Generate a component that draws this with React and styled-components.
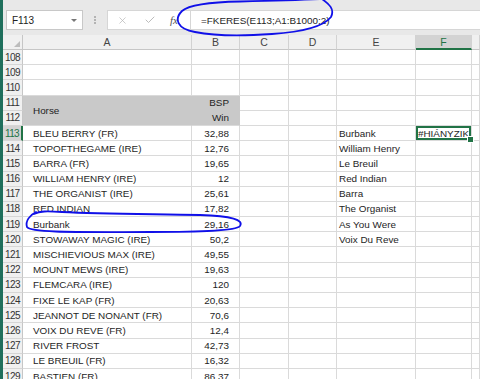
import React from 'react';
import styled, { createGlobalStyle } from 'styled-components';
import { X, Check } from 'lucide-react';

const GREEN = '#217346';
const GRID = '#dadada';
const HEAD_BG = '#f0f0f0';
const SHADE = '#c9c9c9';

const GlobalStyle = createGlobalStyle`
  html, body { margin: 0; padding: 0; background: #fff; }
  body { font-family: "Liberation Sans", Arial, sans-serif; }
`;

const Window = styled.div`
  position: relative;
  width: 480px;
  height: 379px;
  overflow: hidden;
  display: flex;
  background: #fff;
`;

const Edge = styled.div`
  flex: none;
  width: 3px;
  background: #1f6f5c;
`;

const Main = styled.div`
  flex: 1;
  min-width: 0;
  display: flex;
  flex-direction: column;
`;

const FormulaBar = styled.div`
  flex: none;
  height: 35px;
  box-sizing: border-box;
  padding: 10px 0 5px 3px;
  background: #e8e8e8;
  display: flex;
  align-items: stretch;
`;

const NameBox = styled.div`
  width: 77px;
  box-sizing: border-box;
  background: #fff;
  border: 1px solid #c8c8c8;
  display: flex;
  align-items: center;
  justify-content: space-between;
  padding: 0 5px 0 5px;
  font-size: 10px;
  color: #222;
`;

const Caret = styled.span`
  width: 0;
  height: 0;
  border-left: 3px solid transparent;
  border-right: 3px solid transparent;
  border-top: 3px solid #777;
`;

const Grip = styled.div`
  width: 24px;
  display: flex;
  align-items: center;
  justify-content: center;
  &::before {
    content: "";
    width: 0;
    height: 8px;
    border-left: 2px dotted #b3b3b3;
  }
`;

const FuncBox = styled.div`
  width: 83px;
  box-sizing: border-box;
  background: #fff;
  border: 1px solid #d6d6d6;
  border-right: none;
  display: flex;
  align-items: center;
  padding-left: 9px;
  gap: 16px;
  color: #b4b4b4;
`;

const Fx = styled.span`
  font-family: "Liberation Serif", "Times New Roman", serif;
  font-style: italic;
  font-size: 11px;
  color: #555;
  margin-left: -2px;
`;

const FormulaInput = styled.div`
  flex: 1;
  background: #fff;
  border: 1px solid #d6d6d6;
  border-right: none;
  display: flex;
  align-items: center;
  padding-left: 10px;
  font-size: 9.9px;
  color: #1e1e1e;
  white-space: nowrap;
`;

const Sheet = styled.div`
  flex: 1;
  display: grid;
  grid-template-columns: 20px 169px 48px 49px 48px 79px 56px 1fr;
  grid-template-rows: 15px;
  grid-auto-rows: 15.2px;
  overflow: hidden;
  font-size: 9.9px;
  color: #1e1e1e;
`;

const Corner = styled.div`
  background: ${HEAD_BG};
  border-right: 1px solid #c6c6c6;
  border-bottom: 1px solid #c6c6c6;
  box-sizing: border-box;
  display: flex;
  align-items: flex-end;
  justify-content: flex-end;
  padding: 0 2px 2px 0;
  &::after {
    content: "";
    width: 0;
    height: 0;
    border-left: 6px solid transparent;
    border-bottom: 6px solid #bcbcbc;
  }
`;

const ColHead = styled.div`
  box-sizing: border-box;
  background: ${(p) => (p.$active ? '#d3d3d3' : HEAD_BG)};
  border-right: 1px solid #d2d2d2;
  border-bottom: ${(p) => (p.$active ? `2px solid ${GREEN}` : '1px solid #c6c6c6')};
  display: flex;
  align-items: center;
  justify-content: center;
  font-size: 10.5px;
  color: ${(p) => (p.$active ? GREEN : '#444')};
`;

const RowHead = styled.div`
  box-sizing: border-box;
  background: ${(p) => (p.$active ? '#d3d3d3' : HEAD_BG)};
  border-right: ${(p) => (p.$active ? `2px solid ${GREEN}` : '1px solid #c6c6c6')};
  border-bottom: 1px solid #d6d6d6;
  display: flex;
  align-items: center;
  justify-content: center;
  font-size: 10px;
  letter-spacing: -0.6px;
  color: ${(p) => (p.$active ? GREEN : '#333')};
`;

const Cell = styled.div`
  position: relative;
  box-sizing: border-box;
  min-width: 0;
  grid-row: ${(p) => (p.$span ? `span ${p.$span}` : 'auto')};
  background: ${(p) => (p.$shade ? SHADE : '#fff')};
  border-right: 1px solid ${(p) => (p.$shade ? SHADE : GRID)};
  border-bottom: 1px solid ${(p) => (p.$shade && !p.$lastShade ? SHADE : GRID)};
  display: flex;
  align-items: center;
  justify-content: ${(p) => (p.$right ? 'flex-end' : 'flex-start')};
  padding: ${(p) => (p.$right ? '0 10px 0 0' : `0 0 0 ${p.$indent ?? 2}px`)};
  white-space: nowrap;
  overflow: ${(p) => (p.$selected ? 'visible' : 'hidden')};
  z-index: ${(p) => (p.$selected ? 2 : 'auto')};
  box-shadow: ${(p) => (p.$selected ? `inset 0 0 0 2px ${GREEN}` : 'none')};
`;

const Handle = styled.span`
  position: absolute;
  right: -3px;
  bottom: -3px;
  width: 5px;
  height: 5px;
  background: ${GREEN};
  border: 1px solid #fff;
`;

const Ink = styled.svg`
  position: absolute;
  left: 0;
  top: 0;
  pointer-events: none;
  z-index: 10;
`;

const COLS = ['A', 'B', 'C', 'D', 'E', 'F', ''];

const horses = [
  ['BLEU BERRY (FR)', '32,88'],
  ['TOPOFTHEGAME (IRE)', '12,76'],
  ['BARRA (FR)', '19,65'],
  ['WILLIAM HENRY (IRE)', '12'],
  ['THE ORGANIST (IRE)', '25,61'],
  ['RED INDIAN', '17,82'],
  ['Burbank', '29,16'],
  ['STOWAWAY MAGIC (IRE)', '50,2'],
  ['MISCHIEVIOUS MAX (IRE)', '49,55'],
  ['MOUNT MEWS (IRE)', '19,63'],
  ['FLEMCARA (IRE)', '120'],
  ['FIXE LE KAP (FR)', '20,63'],
  ['JEANNOT DE NONANT (FR)', '70,6'],
  ['VOIX DU REVE (FR)', '12,4'],
  ['RIVER FROST', '42,73'],
  ['LE BREUIL (FR)', '16,32'],
  ['BASTIEN (FR)', '86,37'],
];

const lookup = ['Burbank', 'William Henry', 'Le Breuil', 'Red Indian', 'Barra', 'The Organist', 'As You Were', 'Voix Du Reve'];

function Row({ n }) {
  const cells = [];
  cells.push(<RowHead key="h" $active={n === 113}>{n}</RowHead>);
  if (n === 111) {
    cells.push(<Cell key="a" $span={2} $shade $lastShade $indent={10}>Horse</Cell>);
    cells.push(<Cell key="b" $shade $right>BSP</Cell>);
  } else if (n === 112) {
    cells.push(<Cell key="b" $shade $lastShade $right>Win</Cell>);
  } else if (n >= 113) {
    const h = horses[n - 113] || ['', ''];
    cells.push(<Cell key="a" $indent={10}>{h[0]}</Cell>);
    cells.push(<Cell key="b" $right>{h[1]}</Cell>);
  } else {
    cells.push(<Cell key="a" />);
    cells.push(<Cell key="b" />);
  }
  cells.push(<Cell key="c" />);
  cells.push(<Cell key="d" />);
  cells.push(<Cell key="e">{n >= 113 ? lookup[n - 113] || '' : ''}</Cell>);
  if (n === 113) {
    cells.push(
      <Cell key="f" $selected>
        #HIÁNYZIK
        <Handle />
      </Cell>
    );
  } else {
    cells.push(<Cell key="f" />);
  }
  cells.push(<Cell key="g" />);
  return <>{cells}</>;
}

export default function App() {
  const rows = [];
  for (let n = 108; n <= 129; n++) rows.push(n);
  return (
    <>
      <GlobalStyle />
      <Window>
        <Edge />
        <Main>
          <FormulaBar>
            <NameBox>
              <span>F113</span>
              <Caret />
            </NameBox>
            <Grip />
            <FuncBox>
              <X size={11} strokeWidth={1.5} />
              <Check size={12} strokeWidth={1.8} />
              <Fx>fx</Fx>
            </FuncBox>
            <FormulaInput>=FKERES(E113;A1:B1000;2)</FormulaInput>
          </FormulaBar>
          <Sheet>
            <Corner />
            {COLS.map((c, i) => (
              <ColHead key={i} $active={c === 'F'}>{c}</ColHead>
            ))}
            {rows.map((n) => (
              <Row key={n} n={n} />
            ))}
          </Sheet>
        </Main>
        <Ink width="480" height="379" viewBox="0 0 480 379">
          <path
            d="M 322 -1 C 300 0, 262 1, 240 1.5 C 214 2, 190 4, 182 11 C 174 19, 177 29, 195 32 C 215 36, 245 36, 272 34 C 302 32, 323 27, 331 17 C 335 9, 329 4, 322 -1"
            fill="none"
            stroke="#1010e8"
            strokeWidth="1.8"
            strokeLinecap="round"
          />
          <path
            d="M 36 212 C 30 215, 25 221, 27 227 C 31 233, 80 232, 150 232 C 200 232, 236 231, 240 226 C 244 220, 232 216, 200 215 C 150 214, 100 214, 62 212 C 46 211, 40 211, 34 214"
            fill="none"
            stroke="#1010e8"
            strokeWidth="1.8"
            strokeLinecap="round"
          />
        </Ink>
      </Window>
    </>
  );
}
